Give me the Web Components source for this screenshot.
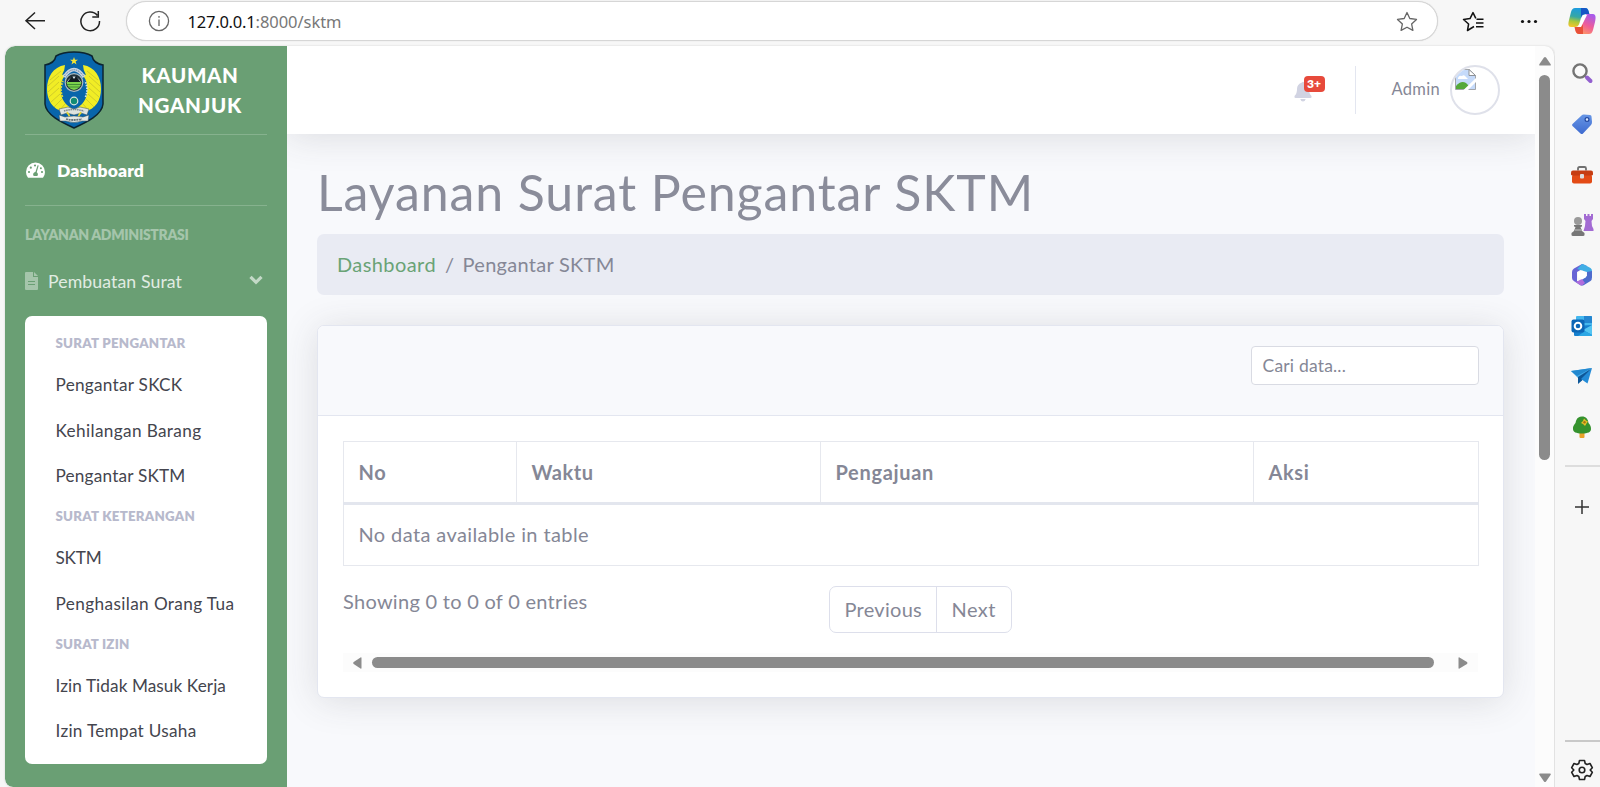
<!DOCTYPE html>
<html lang="id">
<head>
<meta charset="utf-8">
<title>Layanan Surat Pengantar SKTM</title>
<style>
html,body{margin:0;height:100%;overflow:hidden;background:#f7f7f7}
body{font-family:Lato,"Open Sans",sans-serif;color:#858796}
</style>
</head>
<body>
<browser-window></browser-window>
<script>
const define = (name, html, after) => customElements.define(name, class extends HTMLElement {
  connectedCallback() {
    if (this.shadowRoot) return;
    const t = document.createElement('template');
    t.innerHTML = html;
    this.attachShadow({mode: 'open'}).appendChild(document.importNode(t.content, true));
    if (after) after(this, this.shadowRoot);
  }
});

/* Text tracked so that it fills the width given in its w attribute. */
define('fit-text', `<style>:host{display:inline-block;white-space:pre;flex:none}</style><slot></slot>`, el => {
  const w = parseFloat(el.getAttribute('w'));
  const n = el.textContent.length;
  const natural = el.getBoundingClientRect().width;
  if (w && natural) el.style.letterSpacing = ((w - natural) / n).toFixed(3) + 'px';
});

define('town-emblem', `<style>:host{display:block;width:60px;height:78px}svg{display:block}</style>
<svg width="60" height="78" viewBox="0 0 60 78">
<path d="M30 1C24 1 17 2 12 5C11 10 7 13 1 14V53C2 64 17 71 30 77C43 71 58 64 59 53V14C53 13 49 10 48 5C43 2 36 1 30 1Z" fill="#0865ab" stroke="#0c2430" stroke-width="1.500"/>
<path d="M21 14C9 16 3 26 3 38C3 49 8 58 20 61L25 64L27 57C19 52 16 45 17 36C17 29 20 25 24 22L18 24Q21 19 21 14Z" fill="#f1ed25"/>
<path d="M39 14C51 16 57 26 57 38C57 49 52 58 40 61L35 64L33 57C41 52 44 45 43 36C43 29 40 25 36 22L42 24Q39 19 39 14Z" fill="#f1ed25"/>
<path d="M17 20L6 29M15 25L4 35M15 31L4 41M15 37L5 46M16 43L7 51M18 48L10 56M21 53L15 60M43 20L54 29M45 25L56 35M45 31L56 41M45 37L55 46M44 43L53 51M42 48L50 56M39 53L45 60" stroke="#c2bd2b" stroke-width=".7"/>
<path d="M18.500 46C16 40 17 34 19 30" fill="none" stroke="#d8d63a" stroke-width="1.800" stroke-dasharray="2 1"/>
<path d="M41.500 46C44 40 43 34 41 30" fill="none" stroke="#d5e4d8" stroke-width="1.800" stroke-dasharray="1.500 1.200"/>
<path d="M20 26Q30 11 40 26" fill="none" stroke="#c9d4e0" stroke-width="3.600"/>
<path d="M20.500 25Q30 12.500 39.500 25" fill="none" stroke="#51708e" stroke-width="1" stroke-dasharray="1 1"/>
<circle cx="30" cy="31.500" r="8.800" fill="#20323a" stroke="#aebbc0" stroke-width="1.200"/>
<path d="M23 31Q30 20 37 31Z" fill="#dcebf0"/><path d="M23.500 31L28 25L30 28L32 25L36.500 31Z" fill="#121c22"/>
<path d="M22.500 31H37.500Q37 37.500 30 39Q23 37.500 22.500 31Z" fill="#7bd34b"/><path d="M23 33.500H37M24 36H36" stroke="#337b31" stroke-width=".8"/>
<path d="M30 6l1 2.800h3l-2.400 1.800.9 2.900-2.500-1.700-2.500 1.700.9-2.900L26 8.800h3z" fill="#f5e431"/>
<circle cx="30" cy="50" r="3.800" fill="#128b74" stroke="#dce8dc" stroke-width="1.200"/>
<path d="M15 58L24 56L30 58L36 56L45 58L43 64L37 62L30 64L23 62L17 64Z" fill="#dfe3df" stroke="#3d5157" stroke-width=".5"/>
<path d="M20 60Q30 57 40 60" stroke="#7d898c" fill="none" stroke-width="1.500" stroke-dasharray="1.500 .7"/>
<path d="M23 61L26 66L22 68M37 61L34 66L38 68" stroke="#e9d832" fill="none" stroke-width="1.500"/>
<path d="M15 64L21 66Q30 64 39 66L45 64L44 70L38 70Q30 73 22 70L16 70Z" fill="#e4e8e5" stroke="#3d5157" stroke-width=".5"/>
<path d="M22 68Q30 70 38 68" stroke="#66737a" fill="none" stroke-width="1.800" stroke-dasharray="2 .6"/>
</svg>`);

define('browser-toolbar', `<style>
:host{display:flex;height:46px;box-sizing:border-box;padding:1px 0 0 0;align-items:flex-start;background:#f7f7f7}
svg{display:block;flex:none}
.back{margin:10px 0 0 24px}.reload{margin:9px 0 0 33px}
.bar{display:flex;align-items:center;box-sizing:border-box;width:1312px;height:40px;margin-left:25px;border:1px solid #d6d6d6;border-radius:20px;background:#fff;box-shadow:0 0 1px #ccc}
.info{margin-left:20.500px}
.url{margin-left:18px;display:flex;font:16.500px/39px "Noto Sans",sans-serif;color:#777}.url b{font-weight:400;color:#111}
.star{margin-left:auto;margin-right:19px}
.fav{margin:10px 0 0 24px}.dots{margin:18px 0 0 35px}.cop{margin:6px 0 0 29px}
</style>
<svg class="back" width="22" height="20" viewBox="0 0 22 20" fill="none" stroke="#222" stroke-width="1.500"><path d="M11 1.500L2 9.800L11 18M2 9.800H21"/></svg>
<svg class="reload" width="22" height="22" viewBox="0 0 22 22" fill="none" stroke="#222" stroke-width="1.500"><path d="M18.400 5.500A9.300 9.300 0 1 0 20.500 11M19.300 1V7H13.300"/></svg>
<div class="bar">
<svg class="info" width="22" height="22" viewBox="0 0 22 22" fill="none" stroke="#666" stroke-width="1.300"><circle cx="11" cy="11" r="9.600"/><path d="M11 9.500V16M11 6V7.800"/></svg>
<div class="url"><b><fit-text w="68">127.0.0.1</fit-text></b><fit-text w="86">:8000/sktm</fit-text></div>
<svg class="star" width="22" height="21" viewBox="0 0 22 21" fill="none" stroke="#666" stroke-width="1.300" stroke-linejoin="round"><path d="M11 1.500l2.800 6 6.700.9-4.900 4.500 1.300 6.500L11 16.200l-5.900 3.200 1.300-6.500L1.500 8.400l6.700-.9z"/></svg>
</div>
<svg class="fav" width="23" height="21" viewBox="0 0 23 21" fill="none" stroke="#111" stroke-width="1.500" stroke-linejoin="round"><path d="M12 15.500L5.500 19.500L6.600 13L1.500 8.500L8 7.600L11 1.600L13.800 7.300"/><path d="M14.500 8.300H21.500M14 12H21.500M14 15.700H21.500"/></svg>
<svg class="dots" width="18" height="5" viewBox="0 0 18 5" fill="#111"><circle cx="2.500" cy="2.500" r="1.600"/><circle cx="9" cy="2.500" r="1.600"/><circle cx="15.500" cy="2.500" r="1.600"/></svg>
<svg class="cop" width="30" height="28" viewBox="0 0 30 28">
<defs><linearGradient id="a" x1=".4" y1="0" x2=".2" y2="1"><stop stop-color="#1c9be0"/><stop offset=".45" stop-color="#35a7a5"/><stop offset=".7" stop-color="#a8c83c"/><stop offset="1" stop-color="#f7c52c"/></linearGradient>
<linearGradient id="b" x1=".7" y1="0" x2=".2" y2="1"><stop stop-color="#a85bea"/><stop offset=".5" stop-color="#f05c98"/><stop offset="1" stop-color="#ffa25e"/></linearGradient></defs>
<path d="M8 1H18C21 1 21.500 3 22 6L16 8C14 9 13.500 13 12.500 16C11.500 19 10 20 8 20H4C1 20 1 17 2 13L4 5C5 2 6 1 8 1Z" fill="url(#a)"/>
<path d="M14 1H18C21 1 21.500 4 22.500 7H18Q15 7 14 11Z" fill="#1757c5"/>
<path d="M22 27H12C9 27 8.500 24 8 21L13 19C15 18 16 14 17 10C18 8 19 7 21 7H26C29 7 29 11 28 15L26 23C25 26 24 27 22 27Z" fill="url(#b)"/>
<path d="M16 27H12C9 27 8.500 24 7.500 20H12Q15 20 16 17Z" fill="#e8503a"/>
<path d="M16 8H20L14 20H10.500Q13 18 14 13Z" fill="#fff"/>
</svg>`);

define('menu-heading', `<style>:host{display:flex;align-items:center;box-sizing:border-box;padding-bottom:1.500px;height:36.800px;font-size:13.300px;font-weight:800;color:#b7b9cc}</style><slot></slot>`);
define('menu-item', `<style>:host{display:flex;align-items:center;height:45.400px;font-size:17.200px;color:#44454e}</style><slot></slot>`);

define('side-nav', `<style>
:host{display:block;box-sizing:border-box;width:282px;height:741px;padding:0 20px;background:#6a9f74;border-radius:10px 0 0 8px;color:#fff}
.brand{display:flex;height:89px;box-sizing:border-box;border-bottom:1px solid #86b28e}
town-emblem{margin:5px 0 0 19px}
.name{display:flex;flex-direction:column;align-items:center;width:104px;margin:14px 0 0 34px;font-size:20.500px;font-weight:900;line-height:30px}
.dash{display:flex;align-items:center;height:71px;box-sizing:border-box;border-bottom:1px solid #86b28e;font-size:17.500px;font-weight:800}
.dash svg{margin-right:11px}
.head{height:24px;line-height:24px;padding-top:17px;font-size:14px;font-weight:800;color:#a5c5ab}
.open{display:flex;align-items:center;height:68.500px;font-size:17.700px;color:#e1ece3}
.open svg:last-child{margin-left:auto;margin-right:4px;margin-top:-2px}.open fit-text{margin-left:10px}
.panel{height:428px;padding:10px 30.500px;background:#fff;border-radius:7px}
</style>
<div class="brand"><town-emblem></town-emblem><div class="name"><fit-text w="97">KAUMAN</fit-text><fit-text w="104">NGANJUK</fit-text></div></div>
<div class="dash"><svg width="21" height="18" viewBox="0 0 21 18"><path d="M10.500 1.500A9.500 9.500 0 0 0 1 11Q1 14 2.700 16.200Q3 16.700 3.700 16.700H17.300Q18 16.700 18.300 16.200Q20 14 20 11A9.500 9.500 0 0 0 10.500 1.500Z" fill="#fff"/><g fill="#6a9f74"><circle cx="4" cy="11" r="1.100"/><circle cx="5.800" cy="6.700" r="1.100"/><circle cx="10" cy="4.500" r="1.100"/><circle cx="17" cy="11" r="1.100"/><circle cx="15.900" cy="7.200" r="1"/><path d="M13.700 4.500L11.700 11.200A2.500 2.500 0 0 1 12.300 15H8.700A2.500 2.500 0 0 1 10.400 10.900L12.600 4.200Z"/></g></svg><fit-text w="87">Dashboard</fit-text></div>
<div class="head"><fit-text w="163.500">LAYANAN ADMINISTRASI</fit-text></div>
<div class="open"><svg width="13" height="18" viewBox="0 0 13 18"><path d="M1 0H8V5H13V17Q13 18 12 18H1Q0 18 0 17V1Q0 0 1 0ZM9 0L13 4H9Z" fill="#a5c5ab"/><path d="M3 9.500H10M3 12.500H10" stroke="#6a9f74" stroke-width="1"/></svg><fit-text w="134">Pembuatan Surat</fit-text><svg width="14" height="10" viewBox="0 0 14 10"><path d="M1.500 1.800L7 7.300L12.500 1.800" fill="none" stroke="#c3d9c7" stroke-width="3.200"/></svg></div>
<div class="panel">
<menu-heading><fit-text w="130">SURAT PENGANTAR</fit-text></menu-heading>
<menu-item><fit-text w="127">Pengantar SKCK</fit-text></menu-item>
<menu-item><fit-text w="146">Kehilangan Barang</fit-text></menu-item>
<menu-item><fit-text w="130">Pengantar SKTM</fit-text></menu-item>
<menu-heading><fit-text w="139.500">SURAT KETERANGAN</fit-text></menu-heading>
<menu-item><fit-text w="46">SKTM</fit-text></menu-item>
<menu-item><fit-text w="179">Penghasilan Orang Tua</fit-text></menu-item>
<menu-heading><fit-text w="74">SURAT IZIN</fit-text></menu-heading>
<menu-item><fit-text w="170.500">Izin Tidak Masuk Kerja</fit-text></menu-item>
<menu-item><fit-text w="141">Izin Tempat Usaha</fit-text></menu-item>
</div>`);

define('top-bar', `<style>
:host{display:flex;height:88px;background:#fff;box-shadow:0 3px 36px rgba(58,59,69,.15);position:relative;z-index:1;align-items:center;justify-content:flex-end}
.bell{position:relative;width:34px;height:27px;margin-right:27px;margin-top:-1px}
.bell svg{position:absolute;left:0;top:5px}
.badge{position:absolute;left:10px;top:0;width:21px;height:16px;border-radius:4px;background:#e74a3b;color:#fff;font-size:12px;font-weight:800;line-height:16px;text-align:center}
.rule{width:1px;height:48px;background:#e3e6f0;margin-right:36px}
.user{font-size:16.500px;line-height:24px;margin-top:-2px}
.avatar{box-sizing:border-box;width:50px;height:50px;margin:0 35.500px 0 9.500px;border:2px solid #dfe1ea;border-radius:50%;overflow:hidden}
.avatar svg{display:block;margin:2px 0 0 3px}
</style>
<div class="bell"><svg width="18" height="21" viewBox="0 0 18 21" fill="#d1d3e2"><path d="M8 1.500Q9 0 10 1.500Q15 3 15 8Q15 13 17.500 15Q18 17 16.500 17H1.500Q0 17 .5 15Q3 13 3 8Q3 3 8 1.500ZM6.300 18H11.700Q11 20.500 9 20.500Q7 20.500 6.300 18Z"/></svg><span class="badge">3+</span></div>
<div class="rule"></div><div class="user"><fit-text w="48.500">Admin</fit-text></div>
<div class="avatar"><svg width="21" height="21" viewBox="0 0 21 21"><path d="M.5.5H14L20.500 6.500V20.500H.5Z" fill="#c5dafa" stroke="#a2a5aa"/><path d="M3 9Q4 6 7 7Q9 5 11 8L13 10H3Z" fill="#fff"/><path d="M1 20V17Q6 11 11 14L14 17V20Z" fill="#54a83a"/><path d="M14 .5V6.500H20.500Z" fill="#fff" stroke="#8e9297"/><path d="M8.500 21L21 9V13L13 21Z" fill="#fff"/></svg></div>`);

define('data-card', `<style>
:host{display:block;box-sizing:border-box;width:1187px;height:373px;margin-top:30px;border:1px solid #e3e6f0;border-radius:7px;background:#fff;box-shadow:0 3px 36px rgba(58,59,69,.15);overflow:hidden}
.head{display:flex;justify-content:flex-end;box-sizing:border-box;height:90px;padding:20px 24.500px;background:#f8f9fc;border-bottom:1px solid #e3e6f0}
.input{box-sizing:border-box;width:228px;height:39px;padding-left:11px;border:1px solid #d9dbe3;border-radius:4px;background:#fff;font-size:17.500px;line-height:37px}
.body{padding:25px 25px 0;font-size:20px}
table{width:1136px;border-collapse:collapse;table-layout:fixed}
th,td{box-sizing:border-box;padding:0 0 2px 14.500px;text-align:left;border:1px solid #e6e8ee;height:62px}
th{font-weight:700;padding-bottom:1px;border-bottom:3px solid #e3e6ee}
.foot{display:flex;height:87px;padding-top:20px;box-sizing:border-box}
.info{line-height:30px;width:486px}
.pages{display:flex;box-sizing:border-box;height:47px;width:183px;border:1px solid #dddfeb;border-radius:7px;line-height:44px}
.pages span{padding-left:14.500px}.pages span:first-child{width:91.500px;border-right:1px solid #dddfeb}
.scroll{display:flex;align-items:center;height:19px;background:#fcfcfc;padding:0 10px}
.thumb{width:1063px;height:11px;border-radius:6px;background:#8b8b8b;margin:0 24px 0 10px}
</style>
<div class="head"><div class="input"><fit-text w="83.500">Cari data...</fit-text></div></div>
<div class="body"><table><colgroup><col style="width:173px"><col style="width:304px"><col style="width:433px"><col></colgroup>
<thead><tr><th><fit-text w="28">No</fit-text></th><th><fit-text w="62">Waktu</fit-text></th><th><fit-text w="98.500">Pengajuan</fit-text></th><th><fit-text w="41">Aksi</fit-text></th></tr></thead>
<tbody><tr><td colspan="4"><fit-text w="230.500">No data available in table</fit-text></td></tr></tbody></table>
<div class="foot"><div class="info"><fit-text w="244.500">Showing 0 to 0 of 0 entries</fit-text></div><div class="pages"><span><fit-text w="77.500">Previous</fit-text></span><span><fit-text w="44.500">Next</fit-text></span></div></div>
<div class="scroll"><svg width="9" height="12" viewBox="0 0 9 12"><path d="M8.500 1V11Q8.500 12 7.500 11.500L.7 7Q-.3 6 .7 5L7.500.5Q8.500 0 8.500 1Z" fill="#8b8b8b"/></svg><div class="thumb"></div><svg width="10" height="12" viewBox="0 0 10 12"><path d="M.5 1V11Q.5 12 1.500 11.500L9 7Q10 6 9 5L1.500.5Q.5 0 .5 1Z" fill="#8b8b8b"/></svg></div>
</div>`);

define('page-content', `<style>
:host{display:block;padding:28px 31px 0 30px}
h1{margin:0 0 12px;font-size:50px;line-height:60px;font-weight:400;height:60px;color:#8a8c9a}
.crumb{box-sizing:border-box;height:61px;width:1187px;padding:0 0 2px 20px;border-radius:7px;background:#e9ebf3;display:flex;align-items:center;font-size:20px}
.crumb a{color:#6aa376}.crumb i{font-style:normal;margin:0 8.500px 0 9px}
</style>
<h1><fit-text w="717">Layanan Surat Pengantar SKTM</fit-text></h1>
<div class="crumb"><a><fit-text w="99">Dashboard</fit-text></a><i>/</i><fit-text w="152">Pengantar SKTM</fit-text></div>
<data-card></data-card>`);

define('page-scrollbar', `<style>:host{display:flex;flex-direction:column;align-items:center;box-sizing:border-box;width:20px;background:#fcfcfc;border-right:1px solid #e2e2e2;border-radius:0 10px 0 0;padding-top:10px}
.t{width:11px;height:385px;margin-top:9px;border-radius:6px;background:#8b8b8b}svg{display:block}.d{margin-top:313px}</style>
<svg width="12" height="10" viewBox="0 0 12 10"><path d="M1 9.500Q-.3 9.500.5 8L5 1.500Q6 .3 7 1.500L11.500 8Q12.300 9.500 11 9.500Z" fill="#8b8b8b"/></svg><div class="t"></div>
<svg class="d" width="12" height="10" viewBox="0 0 12 10"><path d="M1 .5Q-.3.5.5 2L5 8.500Q6 9.700 7 8.500L11.500 2Q12.300.5 11 .5Z" fill="#8b8b8b"/></svg>`);

define('edge-rail', `<style>
:host{display:flex;flex-direction:column;align-items:center;width:45px;height:741px;padding-top:15px;box-sizing:border-box;background:#f7f7f7}
svg{display:block;width:24px;height:24px;margin-bottom:26.500px;flex:none;margin-left:8px}
.rule{width:35px;height:1.500px;background:#ddd;margin:0 0 0 9px}
svg.plus{margin-top:28px;margin-bottom:0}.low{background:#c9c9c9;margin-top:221px;height:2px}svg.gear{margin:16px 0 0 8px}
</style>
<svg viewBox="0 0 24 24"><circle cx="10" cy="10" r="6.600" fill="#fafafa" stroke="#747474" stroke-width="2.400"/><path d="M15 15L17 17" stroke="#777" stroke-width="2"/><path d="M17 16.500L20.500 20" stroke="#9360cf" stroke-width="4" stroke-linecap="round"/></svg>
<svg viewBox="0 0 24 24"><defs><linearGradient id="t" x2="0" y2="1"><stop stop-color="#6796e5"/><stop offset="1" stop-color="#3e6bd0"/></linearGradient></defs><path d="M11.500 3.500Q12.500 2.500 14 2.600L20 3Q21.500 3 21.500 4.500L22 10Q22 12 21 13L13 21.500Q12 22.500 10.500 21.500L2.500 14Q1.500 13 2.500 12Z" fill="url(#t)"/><circle cx="17" cy="7.500" r="1.900" fill="#d9e8ff" stroke="#2348a0" stroke-width="1.200"/></svg>
<svg viewBox="0 -1.500 24 24"><path d="M8 7V5Q8 3.500 9.500 3.500H14.500Q16 3.500 16 5V7" fill="none" stroke="#707070" stroke-width="1.800"/><rect x="2" y="11" width="20" height="9" rx="2" fill="#e34b16"/><path d="M3 7H21Q23 7 23 9V11Q23 12 21 12H3Q1 12 1 11V9Q1 7 3 7Z" fill="#c63d12"/><rect x="10" y="10.500" width="4" height="4.500" rx="1" fill="#ddd"/></svg>
<svg viewBox="0 0 24 24"><path d="M14 1H16V3H17.500V1H19.500V3H21V1H23V6L21.500 8L22 13L23.500 16V18H13.500L15 13L15.500 8L14 6Z" fill="#a36bd3"/><circle cx="8" cy="8" r="4" fill="#9a9a9a"/><path d="M4 12H12V13.500L10.500 14L12 18L14.500 20V22Q14.500 23 13 23H3Q1.500 23 1.500 22V20L4 18L5.500 14L4 13.500Z" fill="#777"/><path d="M5 17H12" stroke="#aaa" stroke-width="1.500"/></svg>
<svg viewBox="0 0 24 24"><path d="M12 1L4 5.500Q2 6.700 2 9V15Q2 17 4 18L7 19.500V9L17 3Z" fill="#6663d5"/><path d="M12 1Q13 .8 15 2L20.500 5Q22 6 22 8V15L17 12V9L7 6Z" fill="#41aee5"/><path d="M22 14Q22 17 20.500 18L14 22Q12 23 10 22L4 18Q8 19 11 17L17 13V9L22 8Z" fill="#4e6bcd"/><path d="M2 15Q3 20 8 18L12 16L15 20L12 22.500Q11 22.500 10 22L4 18Q2 17 2 15Z" fill="#b06ddd"/><path d="M12 7.500L16 9.700V14.300L12 16.500L8 14.300V9.700Z" fill="#fff"/></svg>
<svg viewBox="0 0 24 24"><rect x="6" y="2" width="16" height="14" rx="1" fill="#44b7ee"/><path d="M14 2H21Q22 2 22 3V9H14Z" fill="#2486d0"/><path d="M4 12L22 11V21Q22 22 21 22H5Q4 22 4 21Z" fill="#1680cf"/><path d="M22 11V21L13 16Z" fill="#55c5f2"/><path d="M8 22L22 22V21L15 17Z" fill="#2ca7e5"/><rect x="1.500" y="5.500" width="13" height="13" rx="2" fill="#0c66b6"/><circle cx="8" cy="12" r="3.300" fill="none" stroke="#fff" stroke-width="2"/></svg>
<svg viewBox="0 0 24 24"><path d="M1 7L22 4L8 14Z" fill="#42aceb"/><path d="M22 4L8 13V20L12 16.500Z" fill="#0d5798"/><path d="M22 4L11 15L17.500 19.500Z" fill="#238bd7"/><path d="M1 7L22 4L7 12Z" fill="#2288cf"/></svg>
<svg viewBox="0 0 24 24"><path d="M9.500 16H14.500V22Q14.500 23 13.500 23H10.500Q9.500 23 9.500 22Z" fill="#eaa329"/><path d="M12 1.500C6 1.500 6 7 5.500 8C3 11 3 12 3 14C3 17 6 18.500 12 18.500S21 17 21 14C21 12 20.500 10 18.500 8C18 4 16 1.500 12 1.500Z" fill="#35922e"/><path d="M14 3.500L16 5.500L18 6.500L16.500 8.500L15 11L13 9L11 8L13 6Z" fill="#e5c027"/><circle cx="14.500" cy="7.300" r="1.200" fill="#a47516"/></svg>
<div class="rule"></div>
<svg class="plus" viewBox="0 0 24 24"><path d="M12 5V19M5 12H19" stroke="#333" stroke-width="1.500"/></svg>
<div class="rule low"></div>
<svg class="gear" viewBox="0 0 24 24" fill="none" stroke="#222" stroke-width="1.600" stroke-linejoin="round"><path d="M9.500 2.500L14.500 2.500L15.200 5.500L17 6.500L20 5.500L22.300 9.700L20.200 12L22.300 14.300L20 18.500L17 17.500L15.200 18.500L14.500 21.500H9.500L8.800 18.500L7 17.500L4 18.500L1.700 14.300L3.800 12L1.700 9.700L4 5.500L7 6.500L8.800 5.500Z"/><circle cx="12" cy="12" r="2.800"/></svg>`);

define('browser-window', `<style>
:host{display:block;width:1600px;height:787px;overflow:hidden;background:#f7f7f7}
.row{display:flex;height:741px;padding-left:5px}
main{width:1248px;background:#f8f9fc;overflow:hidden}
.shell{display:flex;height:741px;width:1550px;border-radius:10px 10px 0 8px;overflow:hidden;box-shadow:0 0 2px #ccc}
</style>
<browser-toolbar></browser-toolbar>
<div class="row"><div class="shell"><side-nav></side-nav><main><top-bar></top-bar><page-content></page-content></main><page-scrollbar></page-scrollbar></div><edge-rail></edge-rail></div>`);
</script>
</body>
</html>
